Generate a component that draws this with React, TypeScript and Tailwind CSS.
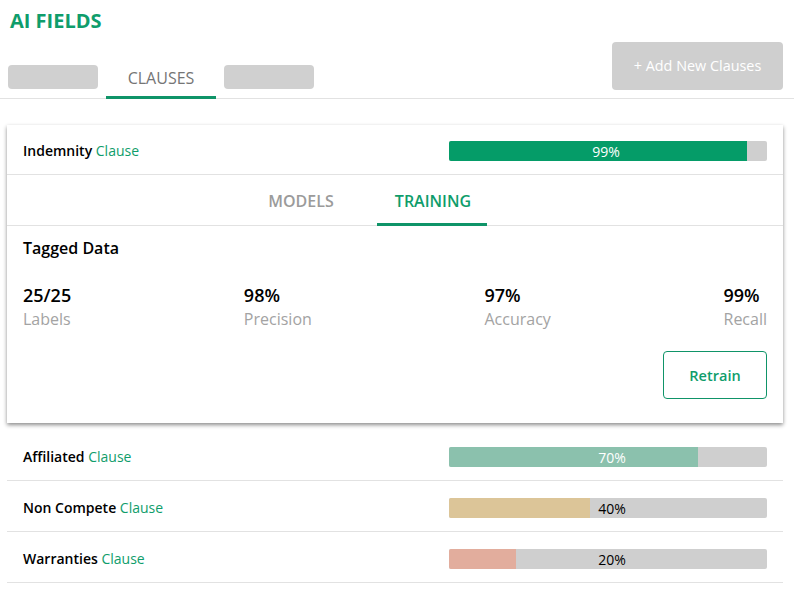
import React from 'react';

const GREEN = 'text-[#0f9d6b]';

const ROWS = [
    { name: 'Affiliated', pct: '70%', width: 'w-[249px]', fill: 'bg-[#8bc1ad]', text: 'text-white' },
    { name: 'Non Compete', pct: '40%', width: 'w-[141px]', fill: 'bg-[#dcc598]', text: 'text-black' },
    { name: 'Warranties', pct: '20%', width: 'w-[67px]', fill: 'bg-[#e2ad9d]', text: 'text-black' },
];

const STATS = [
    { value: '25/25', label: 'Labels' },
    { value: '98%', label: 'Precision' },
    { value: '97%', label: 'Accuracy' },
    { value: '99%', label: 'Recall' },
];

function Bar({ pct, width, fill, text, shift = 'pl-[8px]' }: { pct: string; width: string; fill: string; text: string; shift?: string }) {
    return (
        <div className="relative h-5 w-[318px] rounded-[2px] bg-[#cfcfcf] overflow-hidden">
            <div className={`h-full ${width} ${fill}`} />
            <div className={`absolute inset-0 flex items-center justify-center text-[14px] ${shift} ${text}`}>{pct}</div>
        </div>
    );
}

function Name({ name }: { name: string }) {
    return (
        <div className="-mt-[2px] text-[14px] font-semibold text-black">
            {name} <span className={`font-normal ${GREEN}`}>Clause</span>
        </div>
    );
}

export default function App() {
    return (
        <div className="w-[794px] h-[594px] overflow-hidden bg-white font-['Open_Sans',sans-serif]">
            {/* Header */}
            <div className="relative h-[99px] border-b border-[#e2e2e2]">
                <h1 className={`pl-[10px] pt-[8px] text-[20px] leading-[26px] font-bold ${GREEN}`}>AI FIELDS</h1>
                <div className="flex items-start pl-2 pt-[31px] gap-2">
                    <div className="h-6 w-[90px] rounded-[4px] bg-[#d0d0d0]" />
                    <div className="w-[110px] h-[34px] border-b-[3px] border-[#0f9468] pt-[2px] text-center text-[16px] leading-[22px] text-[#757575]">CLAUSES</div>
                    <div className="h-6 w-[90px] rounded-[4px] bg-[#d0d0d0]" />
                </div>
                <button className="absolute right-[11px] top-[42px] h-12 w-[171px] rounded-[4px] bg-[#cfcfcf] text-[14.4px] text-white">+ Add New Clauses</button>
            </div>

            {/* Expanded clause */}
            <div className="mx-[7px] mt-[26px] h-[298px] w-[776px] bg-white shadow-[0_2px_4px_rgba(0,0,0,0.45)]">
                <div className="flex h-[50px] items-center justify-between border-b border-[#e2e2e2] pl-4 pr-4 pt-[3px]">
                    <Name name="Indemnity" />
                    <Bar pct="99%" width="w-[298px]" fill="bg-[#059c68]" text="text-white" shift="pr-[4px]" />
                </div>
                <div className="flex h-[51px] gap-[21px] border-b border-[#e2e2e2] pl-[239px]">
                    <div className="w-[110px] pt-[15px] text-center text-[16px] leading-[22px] font-semibold text-[#9b9b9b]">MODELS</div>
                    <div className={`h-[51px] w-[110px] border-b-[3px] border-[#0f9468] pl-[2px] pt-[15px] text-center text-[16px] leading-[22px] font-semibold ${GREEN}`}>TRAINING</div>
                </div>
                <div className="px-4 pt-[11px]">
                    <div className="text-[16px] leading-[22px] font-semibold text-black">Tagged Data</div>
                    <div className="mt-[24px] flex justify-between">
                        {STATS.map(s => (
                            <div key={s.label}>
                                <div className="text-[18px] leading-[24px] font-semibold text-black">{s.value}</div>
                                <div className="pt-[1px] text-[16px] leading-[22px] text-[#a3a3a3]">{s.label}</div>
                            </div>
                        ))}
                    </div>
                    <div className="mt-[21px] flex justify-end">
                        <button className={`h-12 w-[104px] rounded-[4px] border border-[#0f9468] pt-[2px] text-[14.5px] font-semibold ${GREEN}`}>Retrain</button>
                    </div>
                </div>
            </div>

            {/* Other clauses */}
            <div className="mx-[7px] mt-[7px] w-[776px]">
                {ROWS.map(r => (
                    <div key={r.name} className="flex h-[51px] items-center justify-between border-b border-[#e2e2e2] pl-4 pr-4 pt-[4px]">
                        <Name name={r.name} />
                        <Bar pct={r.pct} width={r.width} fill={r.fill} text={r.text} />
                    </div>
                ))}
            </div>
        </div>
    );
}
